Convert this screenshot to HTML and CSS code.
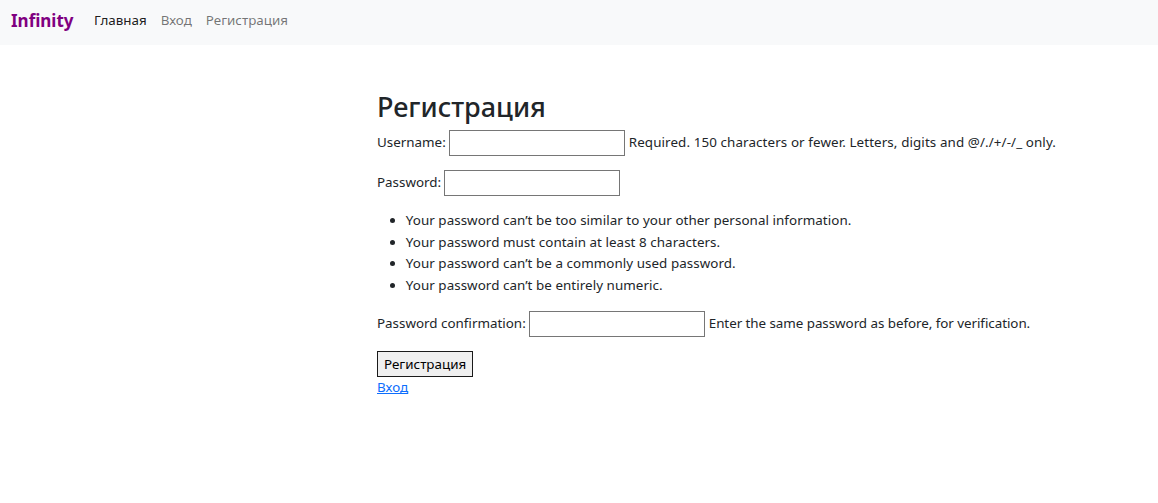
FILE: index.html
```html
<!DOCTYPE html>
<html lang="ru">
<head>
<meta charset="utf-8">
<title>Регистрация</title>
<link rel="stylesheet" href="styles.css">
</head>
<body>
<nav class="navbar">
  <a class="brand" href="#">Infinity</a>
  <ul class="nav">
    <li><a class="nav-link active" href="#">Главная</a></li>
    <li><a class="nav-link" href="#">Вход</a></li>
    <li><a class="nav-link" href="#">Регистрация</a></li>
  </ul>
</nav>
<main class="content">
  <h2 class="title">Регистрация</h2>
  <form class="form">
    <p class="row"><label>Username:</label> <input class="field" type="text"> <span class="help help-wide">Required. 150 characters or fewer. Letters, digits and @/./+/-/_ only.</span></p>
    <p class="row"><label>Password:</label> <input class="field" type="password"></p>
    <ul class="rules">
      <li>Your password can’t be too similar to your other personal information.</li>
      <li>Your password must contain at least 8 characters.</li>
      <li>Your password can’t be a commonly used password.</li>
      <li>Your password can’t be entirely numeric.</li>
    </ul>
    <p class="row"><label>Password confirmation:</label> <input class="field" type="password"> <span class="help">Enter the same password as before, for verification.</span></p>
    <button class="submit" type="button">Регистрация</button>
  </form>
  <a class="link" href="#">Вход</a>
</main>
</body>
</html>
```

FILE: styles.css
```css
* { box-sizing: border-box; }

body {
  margin: 0;
  font-family: "Noto Sans", "Open Sans", sans-serif;
  font-size: 13.4px;
  line-height: 21.6px;
  color: #212529;
  background: #fff;
}

.navbar {
  display: flex;
  align-items: center;
  height: 45px;
  padding: 0 11px 4px;
  background: #f8f9fa;
}

.brand {
  font-size: 17px;
  font-weight: 700;
  color: #800080;
  text-decoration: none;
  margin-right: 13.5px;
}

.nav {
  display: flex;
  list-style: none;
  margin: 0;
  padding: 0;
}

.nav-link {
  display: block;
  padding: 0 7px;
  color: rgba(0, 0, 0, 0.55);
  text-decoration: none;
}

.nav-link.active { color: rgba(0, 0, 0, 0.9); }

.content {
  margin: 44px 0 0 377px;
}

.title {
  margin: 0 0 5px;
  font-size: 27px;
  font-weight: 500;
  line-height: 35.5px;
}

.form { margin: 0; }

.row {
  margin: 0 0 14.4px;
  display: flex;
  align-items: center;
  gap: 3px;
  height: 26px;
}

.field {
  width: 176px;
  height: 26px;
  margin: 0;
  border: 1px solid #767676;
  border-radius: 0;
  padding: 1px 2px;
  font: inherit;
}

.help {
  margin-left: 1px;
  letter-spacing: -0.05px;
}

.help-wide { letter-spacing: 0.1px; }

.rules {
  margin: 0 0 14.4px;
  padding-left: 28.8px;
  letter-spacing: 0.05px;
}

.submit {
  display: block;
  height: 26px;
  margin: 0;
  padding: 0 6px;
  font: inherit;
  color: #000;
  background: #efefef;
  border: 1px solid #1a1a1a;
  border-radius: 0;
}

.link {
  color: #0d6efd;
  text-decoration: underline;
}
```
